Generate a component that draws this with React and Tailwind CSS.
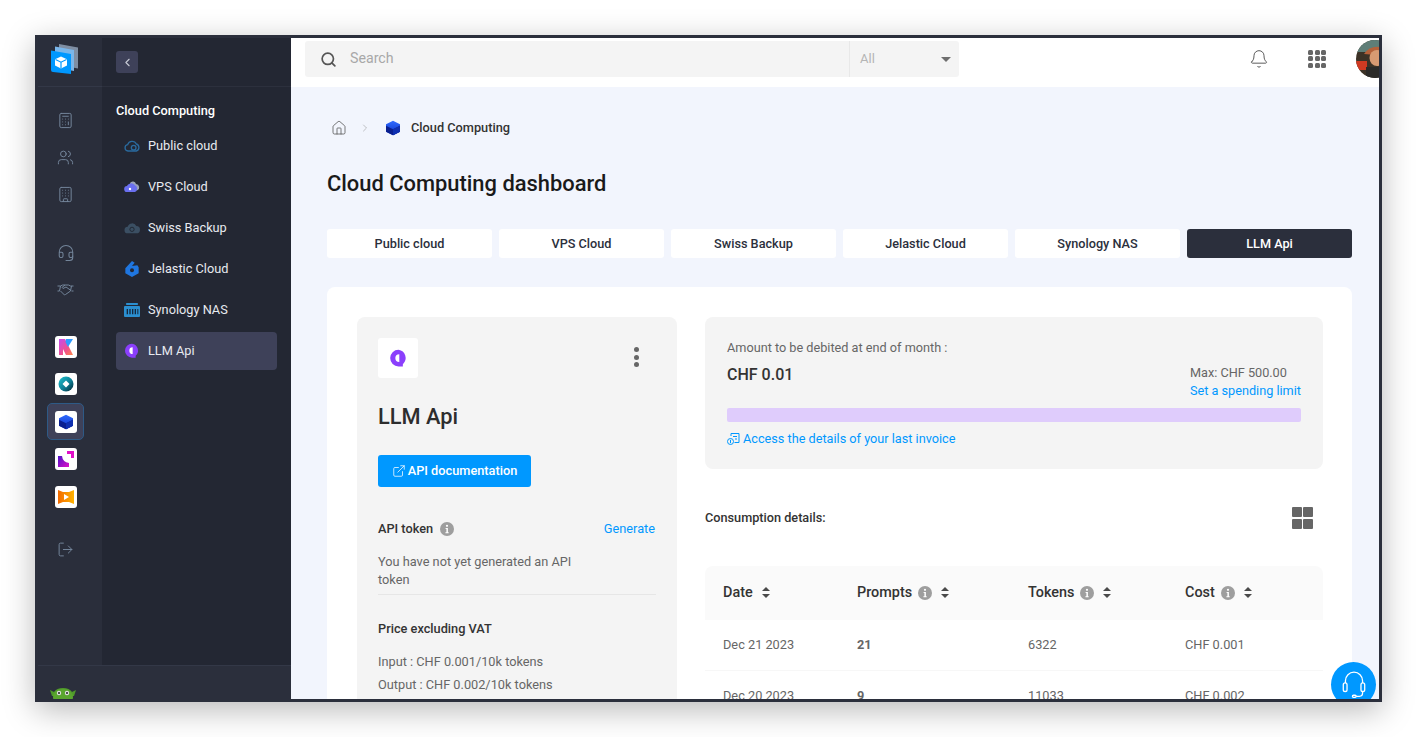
import React from "react";
import { Calculator, Users, Building, Headset, LogOut, ChevronLeft, ChevronRight, Home, Search, Bell, ExternalLink } from "lucide-react";

const Cube = ({ s = 16, id = "c" }) => (
  <svg width={s} height={s} viewBox="0 0 24 24">
    <defs>
      <linearGradient id={id} x1="0" y1="0" x2="0" y2="1"><stop offset="0" stopColor="#2f6bff" /><stop offset="1" stopColor="#0b2fc4" /></linearGradient>
    </defs>
    <polygon points="12,1 22.5,6.5 22.5,17.5 12,23 1.5,17.5 1.5,6.5" fill={`url(#${id})`} />
    <polygon points="1.5,8.5 12,14 22.5,8.5 22.5,17.5 12,23 1.5,17.5" fill="#0a1f8f" />
    <polygon points="12,14 22.5,8.5 22.5,17.5 12,23" fill="#0f2fb0" />
  </svg>
);

const Bubble = ({ s = 16 }) => (
  <svg width={s} height={s} viewBox="0 0 24 24">
    <path d="M12 1a10.500 10.500 0 1 0 0 21h5.500v-2.800A10.500 10.500 0 0 0 12 1z" fill="#8b3ffc" />
    <path d="M13 6.500v10a5 5 0 0 1 0-10z" fill="#fff" />
  </svg>
);

const Info = ({ s = 14 }) => (
  <svg width={s} height={s} viewBox="0 0 14 14" className="shrink-0">
    <circle cx="7" cy="7" r="7" fill="#9e9e9e" />
    <circle cx="7" cy="3.800" r="1.100" fill="#fff" />
    <path d="M5.600 6h2.300v4.200h.8v1H5.400v-1h1V7h-.8z" fill="#fff" />
  </svg>
);

const Sort = () => (
  <svg width="8" height="11" viewBox="0 0 8 11" className="shrink-0">
    <polygon points="4,0 8,4 0,4" fill="#4a4a4a" />
    <polygon points="4,11 8,7 0,7" fill="#4a4a4a" />
  </svg>
);

const Tile = ({ children }) => (
  <div className="w-[22px] h-[22px] bg-white rounded-[3px] flex items-center justify-center">{children}</div>
);

const RailIcon = ({ children }) => (
  <div className="h-[37px] flex items-center justify-center text-[#73859a]">{children}</div>
);

const RailTile = ({ children, active }) => (
  <div className="h-[37.500px] flex items-center justify-center">
    {active ? (
      <div className="w-[37px] h-[37px] rounded-[5px] bg-[#3e4159] border border-[#2e5a86] flex items-center justify-center -ml-[1px]">
        <Tile>{children}</Tile>
      </div>
    ) : (
      <Tile>{children}</Tile>
    )}
  </div>
);

const menu = [
  ["Public cloud", (
    <svg width="16" height="12" viewBox="0 0 24 18" fill="none" stroke="#2a6a9e" strokeWidth="2"><path d="M6 16.500a4.800 4.800 0 0 1-.5-9.500 7 7 0 0 1 13-1 5.500 5.500 0 0 1 0 10.500z" /><circle cx="14.500" cy="11.500" r="3.500" /></svg>
  )],
  ["VPS Cloud", (
    <svg width="16" height="12" viewBox="0 0 24 18"><path d="M9 3a5 5 0 0 1 9 1.500 5 5 0 0 1 2 9.500H12z" fill="#9aa3b8" /><path d="M5 16.500a4.500 4.500 0 0 1-.5-9 7 7 0 0 1 12-1 5.500 5.500 0 0 1 0 10z" fill="#6a6ff0" /><circle cx="9" cy="12" r="1.800" fill="#fff" /></svg>
  )],
  ["Swiss Backup", (
    <svg width="16" height="12" viewBox="0 0 24 18"><path d="M6 17a5 5 0 0 1-.5-10 7 7 0 0 1 13-1 5.500 5.500 0 0 1 0 11z" fill="#3b4f63" /><circle cx="12" cy="11" r="3.200" fill="none" stroke="#1f2733" strokeWidth="1.400" /></svg>
  )],
  ["Jelastic Cloud", (
    <svg width="14" height="16" viewBox="0 0 20 24"><path d="M10 0l4 2.500-4 5 8-1 2 3v9L10 24 0 18.500V11z" fill="#1f76e0" /><circle cx="10" cy="14" r="3" fill="#232733" /></svg>
  )],
  ["Synology NAS", (
    <svg width="16" height="14" viewBox="0 0 24 21"><rect x="3" y="0" width="18" height="3" rx="1" fill="#2b8fd0" /><rect x="0" y="4.500" width="24" height="16.500" rx="1.500" fill="#2b8fd0" /><path d="M4 9h2v8H4zM8 9h2v8H8zM12 9h2v8h-2zM16 9h2v8h-2zM20 9h1.500v8H20z" fill="#14283e" /></svg>
  )],
  ["LLM Api", <Bubble s={16} />],
];

const tabs = ["Public cloud", "VPS Cloud", "Swiss Backup", "Jelastic Cloud", "Synology NAS", "LLM Api"];

const rows = [
  ["Dec 21 2023", "21", "6322", "CHF 0.001"],
  ["Dec 20 2023", "9", "11033", "CHF 0.002"],
];

export default function App() {
  return (
    <div className="w-[1417px] h-[737px] bg-white pl-[35px] pt-[35px] overflow-hidden font-['Roboto',sans-serif]">
      <div className="relative w-[1347px] h-[667px] border-[3px] border-[#2b2f3c] flex overflow-hidden shadow-[0_8px_30px_rgba(0,0,0,0.28)]">
        {/* Sidebar */}
        <aside className="w-[253px] shrink-0 flex flex-col bg-[#2b2f3c]">
          <div className="flex-1 flex min-h-0">
            <div className="w-[64px] shrink-0 bg-[#2a2e3b] flex flex-col">
              <div className="h-[49px] border-b border-[#333847] flex items-center justify-center pr-[10px] pb-[6px]">
                <svg width="30" height="32" viewBox="0 0 30 32">
                  <path d="M9 1l19 3.500v21L9 22z" fill="#7f8ea3" />
                  <path d="M5 3.500l19 3.500v21L5 24.500z" fill="#7ab6ea" />
                  <path d="M1 7.500L21 11v20L3 29a2 2 0 0 1-2-2z" fill="#0098ff" />
                  <path d="M11 13.500l6 2.800v6.200l-6 3-6-3v-6.200z" fill="#fff" />
                  <path d="M5.500 16.500l5.500 2.700 5.500-2.700M11 19.200v6" fill="none" stroke="#0098ff" strokeWidth="1.200" />
                </svg>
              </div>
              <div className="pr-[8px]">
                <div className="pt-[15px]">
                  <RailIcon><Calculator size={17} strokeWidth={1.4} className="-ml-[1px]" /></RailIcon>
                  <RailIcon><Users size={17} strokeWidth={1.4} className="-ml-[1px]" /></RailIcon>
                  <RailIcon><Building size={17} strokeWidth={1.4} className="-ml-[1px]" /></RailIcon>
                </div>
                <div className="mt-[21px]">
                  <RailIcon><Headset size={18} strokeWidth={1.4} className="-ml-[1px]" /></RailIcon>
                  <RailIcon>
                    <svg width="17" height="12" viewBox="0 0 17 12" fill="none" stroke="currentColor" strokeWidth="1" className="-ml-[1px]">
                      <path d="M0.500 2h3l2-1h2.500l-3 2.500 1 1 3-1.500 5 3.500M16.500 2h-3l-2-1H8" />
                      <path d="M3.500 7l4 4 1-.5 5-3.500 1-5M3.500 2l-1 5H.5M14.500 7h2" />
                    </svg>
                  </RailIcon>
                </div>
                <div className="mt-[20px]">
                  <RailTile>
                    <svg width="16" height="16" viewBox="0 0 16 16">
                      <defs><linearGradient id="kk" x1="0" y1="0" x2="1" y2="1"><stop offset="0" stopColor="#c44bf0" /><stop offset=".6" stopColor="#f0508c" /><stop offset="1" stopColor="#ff8a4a" /></linearGradient></defs>
                      <polygon points="1,0 7,0 15,16 8,16 5,10 5,16 1,16" fill="url(#kk)" />
                      <polygon points="8,0 15,0 10,8 7.500,3" fill="#2f9bff" />
                    </svg>
                  </RailTile>
                  <RailTile>
                    <svg width="16" height="16" viewBox="0 0 16 16">
                      <defs><linearGradient id="sw" x1="0" y1="0" x2="1" y2="1"><stop offset="0" stopColor="#1fc2cf" /><stop offset=".55" stopColor="#0d7f96" /><stop offset="1" stopColor="#03212e" /></linearGradient></defs>
                      <circle cx="8" cy="8" r="7.500" fill="url(#sw)" />
                      <polygon points="8,4.500 11.500,8 8,11.500 4.500,8" fill="#fff" />
                    </svg>
                  </RailTile>
                  <RailTile active><Cube s={16} id="c2" /></RailTile>
                  <RailTile>
                    <svg width="16" height="16" viewBox="0 0 16 16">
                      <defs><linearGradient id="kd" x1="0" y1="0" x2="1" y2="1"><stop offset="0" stopColor="#4b12c7" /><stop offset="1" stopColor="#e010c8" /></linearGradient></defs>
                      <path d="M0 5h4a8 8 0 0 0 7 7v4H0z" fill="url(#kd)" />
                      <path d="M9 0h7v7h-3V3H9z" fill="#e010c8" />
                    </svg>
                  </RailTile>
                  <RailTile>
                    <svg width="16" height="16" viewBox="0 0 16 16">
                      <defs><linearGradient id="vd" x1="0" y1="0" x2="1" y2="0"><stop offset="0" stopColor="#f26a00" /><stop offset="1" stopColor="#ffb300" /></linearGradient></defs>
                      <path d="M0 1l5 2h6l5-2v14l-5-2H5l-5 2z" fill="url(#vd)" />
                      <polygon points="6,5 11,8 6,11" fill="#fff" />
                    </svg>
                  </RailTile>
                </div>
                <div className="mt-[15px]">
                  <RailIcon><LogOut size={17} strokeWidth={1.4} className="-ml-[1px]" /></RailIcon>
                </div>
              </div>
            </div>
            <div className="flex-1 bg-[#232733] flex flex-col">
              <div className="h-[49px] border-b border-[#2c303d] flex items-center pl-[14px] shrink-0">
                <div className="w-[22px] h-[22px] rounded-[3px] bg-[#3e4159] flex items-center justify-center text-[#c8cbd6]">
                  <ChevronLeft size={13} />
                </div>
              </div>
              <div className="px-[14px]">
                <div className="h-[46px] flex items-center pt-[1px] text-[12.750px] font-medium text-white whitespace-nowrap">Cloud Computing</div>
                <div className="flex flex-col gap-[3px] -mt-[6px]">
                  {menu.map(([label, icon], i) => (
                    <div key={label} className={`h-[38px] flex items-center rounded-[4px] text-[12.750px] text-[#e8eaf0] ${i === 5 ? "bg-[#3e4159]" : ""}`}>
                      <div className="w-[32px] shrink-0 flex items-center justify-center">{icon}</div>
                      {label}
                    </div>
                  ))}
                </div>
              </div>
            </div>
          </div>
          <div className="h-[34px] shrink-0 border-t border-[#333847] relative overflow-hidden pl-[11px]">
            <svg width="28" height="16" viewBox="0 0 28 16" className="mt-[21px]">
              <path d="M1 3l4 2a10 7 0 0 1 18 0l4-2-2 6H3z" fill="#4f9a2a" />
              <ellipse cx="14" cy="10" rx="10" ry="8" fill="#5aa52f" />
              <circle cx="10" cy="6" r="2.200" fill="#ddd" /><circle cx="18" cy="6" r="2.200" fill="#ddd" />
              <circle cx="10" cy="6" r="1" fill="#222" /><circle cx="18" cy="6" r="1" fill="#222" />
            </svg>
          </div>
        </aside>

        {/* Main */}
        <main className="flex-1 min-w-0 flex flex-col bg-[#f2f5fd]">
          <header className="h-[49px] shrink-0 bg-white flex items-start pl-[14px] relative">
            <div className="mt-[3px] w-[654px] h-[36px] bg-[#f4f4f4] rounded-[3px] flex items-center text-[14.200px]">
              <div className="w-[545px] h-full flex items-center pl-[15px] gap-[13px] text-[#a8a8a8] border-r border-[#e8e8e8]">
                <Search size={17} className="text-[#555]" strokeWidth={2.4} />
                Search
              </div>
              <div className="flex-1 flex items-center justify-between pl-[10px] pr-[8px] text-[13px] text-[#b5b5b5]">
                All
                <span className="w-0 h-0 border-l-[5px] border-r-[5px] border-t-[5px] border-l-transparent border-r-transparent border-t-[#6e6e6e]" />
              </div>
            </div>
            <div className="ml-auto flex items-center h-[39px] mt-[1px]">
              <Bell size={20} strokeWidth={1.1} className="text-[#4d4d4d] mr-[39px]" />
              <div className="grid grid-cols-3 gap-[1.500px] mr-[30px]">
                {Array.from({ length: 9 }).map((_, i) => (
                  <span key={i} className="w-[5px] h-[5px] rounded-[1.500px] bg-[#666]" />
                ))}
              </div>
              <div className="w-[23px] h-[38px] overflow-hidden">
                <svg width="38" height="38" viewBox="0 0 38 38">
                  <defs><clipPath id="av"><circle cx="19" cy="19" r="19" /></clipPath></defs>
                  <g clipPath="url(#av)">
                    <rect width="38" height="38" fill="#3c3226" />
                    <rect y="0" width="38" height="12" fill="#5f7e78" />
                    <path d="M8 14q7-10 20-6l2 8z" fill="#b5613a" />
                    <ellipse cx="21" cy="18" rx="7.500" ry="8" fill="#d89a72" />
                    <rect x="0" y="21" width="11" height="9" fill="#d03a22" />
                    <rect x="10" y="27" width="28" height="11" fill="#2b2a28" />
                  </g>
                </svg>
              </div>
            </div>
          </header>

          <div className="flex-1 min-h-0 overflow-hidden pl-[36px] pr-[27px]">
            <div className="h-[82px] flex items-center pl-[4px] text-[12.750px] font-medium text-[#333]">
              <Home size={16} strokeWidth={1.2} className="text-[#555]" />
              <ChevronRight size={12} strokeWidth={1} className="text-[#888] ml-[12px]" />
              <span className="ml-[14px]"><Cube s={16} id="c3" /></span>
              <span className="ml-[10px]">Cloud Computing</span>
            </div>
            <h1 className="text-[21.900px] leading-[30px] font-medium text-[#1a1a1a] h-[30px]">Cloud Computing dashboard</h1>
            <div className="mt-[30px] grid grid-cols-6 gap-[7px]">
              {tabs.map((t, i) => (
                <div key={t} className={`h-[29px] rounded-[3px] flex items-center justify-center text-[12.700px] font-medium ${i === 5 ? "bg-[#2b2f3c] text-white" : "bg-white text-[#2b2f3c]"}`}>{t}</div>
              ))}
            </div>

            <section className="mt-[29px] bg-white rounded-[8px] py-[30px] pl-[30px] pr-[29px] flex gap-[28px] items-start">
              {/* Left card */}
              <div className="w-[320px] shrink-0 bg-[#f4f4f4] rounded-[8px] p-[21px] pb-[30px]">
                <div className="flex items-center justify-between">
                  <div className="w-[40px] h-[40px] bg-white rounded-[3px] flex items-center justify-center"><Bubble s={19} /></div>
                  <div className="flex flex-col gap-[2.500px] mr-[17px] -mt-[2px]">
                    <span className="w-[5px] h-[5px] rounded-full bg-[#666]" />
                    <span className="w-[5px] h-[5px] rounded-full bg-[#666]" />
                    <span className="w-[5px] h-[5px] rounded-full bg-[#666]" />
                  </div>
                </div>
                <div className="mt-[24px] text-[21.800px] leading-[30px] font-medium text-[#2d2d2d]">LLM Api</div>
                <div className="mt-[23px] w-[153px] h-[32px] bg-[#0098ff] rounded-[3px] flex items-center justify-center gap-[2px] text-[12.750px] font-medium text-white">
                  <ExternalLink size={14} strokeWidth={1.3} />
                  API documentation
                </div>
                <div className="mt-[32px] mr-[1px] flex items-center justify-between h-[20px] text-[12.750px]">
                  <div className="flex items-center gap-[7px] font-medium text-[#333]">API token <Info /></div>
                  <span className="text-[#0098ff]">Generate</span>
                </div>
                <div className="mt-[14px] w-[220px] text-[12.750px] leading-[18px] text-[#666]">You have not yet generated an API token</div>
                <div className="mt-[5px] border-t border-[#e6e6e6]" />
                <div className="mt-[24px] text-[12.750px] leading-[20px] font-medium text-[#333]">Price excluding VAT</div>
                <div className="mt-[11px] text-[12.750px] leading-[23px] text-[#666]">
                  <div>Input : CHF 0.001/10k tokens</div>
                  <div>Output : CHF 0.002/10k tokens</div>
                </div>
              </div>

              {/* Right col */}
              <div className="flex-1 min-w-0">
                <div className="h-[152px] bg-[#f4f4f4] rounded-[8px] px-[22px] pt-[22px]">
                  <div className="text-[12.700px] leading-[18px] text-[#666]">Amount to be debited at end of month :</div>
                  <div className="mt-[7px] flex justify-between items-start">
                    <div className="text-[16px] leading-[22px] font-medium text-[#333]">CHF 0.01</div>
                    <div className="text-[12.700px] leading-[18px]">
                      <div className="text-[#666]">Max: CHF 500.00</div>
                      <div className="text-[#0098ff]">Set a spending limit</div>
                    </div>
                  </div>
                  <div className="mt-[8px] h-[14px] rounded-[2px] bg-[#dfccfc]" />
                  <div className="mt-[8px] flex items-center gap-[2px] text-[12.700px] leading-[18px] text-[#0098ff]">
                    <svg width="14" height="14" viewBox="0 0 14 14" fill="none" stroke="#0098ff" strokeWidth="1"><path d="M4 4V1.500h8v9H7.500" /><path d="M6 4.500h4M8 7h2" /><circle cx="3.500" cy="9.500" r="3" /><path d="M3.500 7.800v3.400" /></svg>
                    Access the details of your last invoice
                  </div>
                </div>
                <div className="mt-[38px] flex items-center justify-between h-[22px]">
                  <div className="text-[12.700px] font-medium text-[#333]">Consumption details:</div>
                  <div className="grid grid-cols-2 gap-[1.500px] mr-[10px]">
                    {[0, 1, 2, 3].map((i) => (
                      <span key={i} className="w-[10px] h-[10px] rounded-[1px] bg-[#666]" />
                    ))}
                  </div>
                </div>
                <div className="mt-[37px]">
                  <div className="h-[54px] rounded-t-[8px] bg-[#fafafa] grid grid-cols-[134px_171px_157px_1fr] items-center px-[18px] text-[14.400px] font-medium text-[#333]">
                    <div className="flex items-center gap-[9px]">Date <Sort /></div>
                    <div className="flex items-center gap-[6px]">Prompts <Info /><span className="ml-[3px]"><Sort /></span></div>
                    <div className="flex items-center gap-[6px]">Tokens <Info /><span className="ml-[3px]"><Sort /></span></div>
                    <div className="flex items-center gap-[6px]">Cost <Info /><span className="ml-[3px]"><Sort /></span></div>
                  </div>
                  {rows.map((r) => (
                    <div key={r[0]} className="h-[51px] border-b border-[#f7f7f7] grid grid-cols-[134px_171px_157px_1fr] items-center px-[18px] text-[12.750px] text-[#666]">
                      <div>{r[0]}</div>
                      <div className="font-bold">{r[1]}</div>
                      <div>{r[2]}</div>
                      <div>{r[3]}</div>
                    </div>
                  ))}
                </div>
              </div>
            </section>
          </div>
        </main>

        {/* Floating support button */}
        <div className="absolute left-[1293px] top-[624px] w-[45px] h-[45px] rounded-full bg-[#0098ff] flex items-start justify-center pt-[7px] text-white">
          <svg width="30" height="30" viewBox="0 0 28 28" fill="none" stroke="#fff" strokeWidth="1.200">
            <path d="M6 13V11a8 8 0 0 1 16 0v2" />
            <rect x="4" y="13" width="3.500" height="8" rx="1.750" />
            <rect x="20.500" y="13" width="3.500" height="8" rx="1.750" />
            <path d="M22 21v1.500a3 3 0 0 1-3 3h-3" />
            <rect x="12.500" y="24.500" width="3.500" height="2" rx="1" />
          </svg>
        </div>
      </div>
    </div>
  );
}
